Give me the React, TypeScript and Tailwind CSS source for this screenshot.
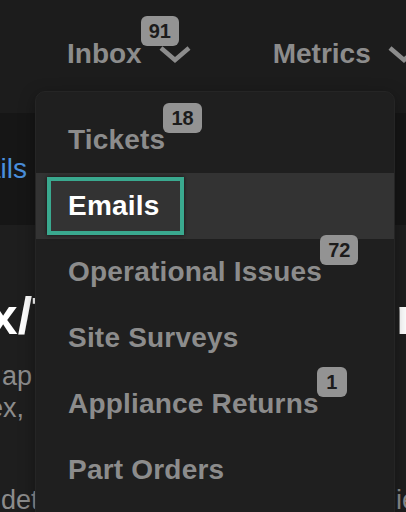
import React from 'react';

interface MenuItem {
  label: string;
  count?: number;
  active?: boolean;
}

const items: MenuItem[] = [
  { label: 'Tickets', count: 18 },
  { label: 'Emails', active: true },
  { label: 'Operational Issues', count: 72 },
  { label: 'Site Surveys' },
  { label: 'Appliance Returns', count: 1 },
  { label: 'Part Orders' },
];

const Badge: React.FC<{ value: number; className: string }> = ({ value, className }) => (
  <span
    className={`absolute h-[30px] min-w-[30px] px-[8px] rounded-[6px] bg-[#939393] text-[#1c1c1c] text-[20px] font-bold leading-[30px] tracking-normal text-center ${className}`}
  >
    {value}
  </span>
);

const Chevron: React.FC = () => (
  <svg width="32" height="18" viewBox="0 0 32 18" fill="none">
    <polyline points="2,3 16,15 30,3" stroke="#8c8c8c" strokeWidth="4.5" />
  </svg>
);

export default function App() {
  return (
    <div className="relative w-[406px] h-[512px] overflow-hidden bg-[#1e1e1e] font-['Liberation_Sans',Arial,sans-serif]">
      {/* top nav */}
      <nav className="h-[113px] bg-[#1c1c1c] pt-[38px] pl-[67px] flex items-start gap-[82px]">
        <div className="flex items-center gap-[17px]">
          <span className="relative text-[28px] font-bold leading-[32px] text-[#8c8c8c]">
            Inbox
            <Badge value={91} className="left-full -ml-[1px] -top-[22px]" />
          </span>
          <Chevron />
        </div>
        <div className="flex items-center gap-[17px] shrink-0">
          <span className="text-[28px] font-bold leading-[32px] text-[#8c8c8c]">Metrics</span>
          <Chevron />
        </div>
      </nav>

      {/* sub tabs band */}
      <div className="h-[112px] bg-[#161616] flex items-center">
        <div className="w-[27px] overflow-hidden flex justify-end whitespace-nowrap">
          <span className="text-[28px] leading-[32px] text-[#4a8fdc]">Emails</span>
        </div>
      </div>

      {/* page content, mostly under the menu */}
      <div className="pt-[61px]">
        <div className="flex justify-between whitespace-nowrap text-white text-[52px] font-bold leading-[60px]">
          <div className="w-[35px] overflow-hidden flex justify-end">
            <span className="-mr-[29px]">Inbox/T</span>
          </div>
          <div className="w-[10px] overflow-hidden">
            <span>n</span>
          </div>
        </div>
        <div className="mt-[14px] text-[27px] leading-[32px] text-[#8c8c8c] whitespace-nowrap">
          <div className="ml-[2px] w-[30px] overflow-hidden flex justify-end">
            <span>Swap</span>
          </div>
          <div className="w-[24px] overflow-hidden flex justify-end">
            <span>index,</span>
          </div>
        </div>
        <div className="mt-[60px] flex justify-between text-[27px] leading-[32px] text-[#8c8c8c] whitespace-nowrap">
          <div className="w-[35px] pl-[1px] overflow-hidden">
            <span>details</span>
          </div>
          <div className="w-[10px] overflow-hidden">
            <span>ie</span>
          </div>
        </div>
      </div>

      {/* dropdown menu */}
      <div className="absolute left-[35px] top-[91px] w-[360px] h-[440px] rounded-[10px] bg-[#1f1f1f] border border-[#252525] pt-[15px] shadow-[0_4px_16px_rgba(0,0,0,0.35)]">
        {items.map((item) => (
          <div
            key={item.label}
            className={`h-[66px] py-[4px] pl-[11px] flex ${item.active ? 'bg-[#333333]' : ''}`}
          >
            <div
              className={`h-[58px] pl-[17px] pr-[21px] border-[4px] ${
                item.active
                  ? 'border-[#3aa98f] shadow-[0_0_4px_rgba(0,0,0,0.7)]'
                  : 'border-transparent'
              }`}
            >
              <span
                className={`relative block whitespace-nowrap text-[28px] font-bold leading-[50px] tracking-[0.2px] ${
                  item.active ? 'text-white' : 'text-[#8c8c8c]'
                }`}
              >
                {item.label}
                {item.count !== undefined && (
                  <Badge value={item.count} className="left-full -ml-[2px] -top-[12px]" />
                )}
              </span>
            </div>
          </div>
        ))}
      </div>
    </div>
  );
}
